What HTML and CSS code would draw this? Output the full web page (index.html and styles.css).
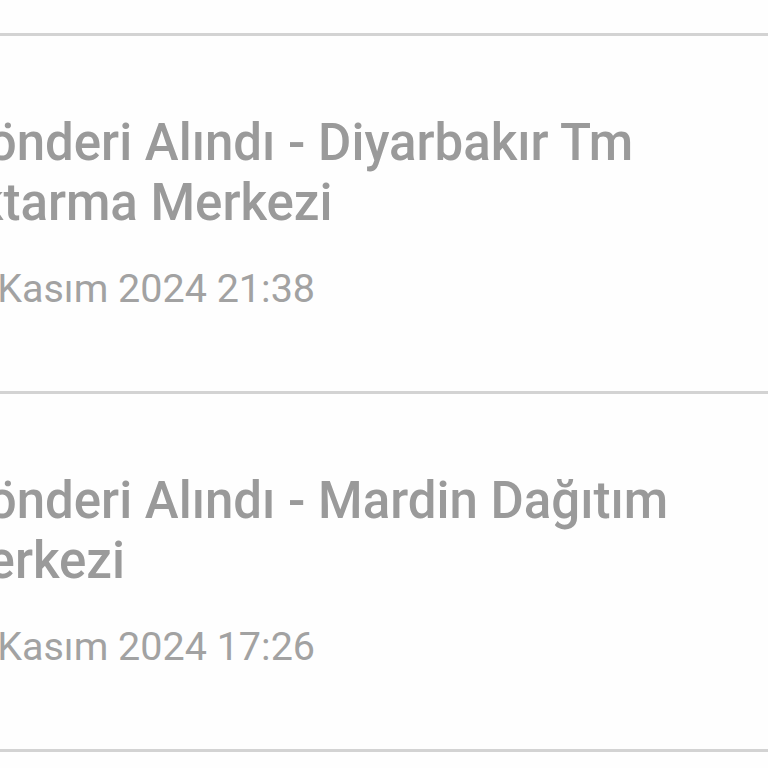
FILE: index.html
```html
<!DOCTYPE html>
<html lang="tr">
<head>
<meta charset="utf-8">
<title>Gönderi Hareketleri</title>
<link rel="stylesheet" href="styles.css">
</head>
<body>
<div class="list">
  <div class="item">
    <div class="title">Gönderi Alındı - Diyarbakır Tm Aktarma Merkezi</div>
    <div class="date">20 Kasım 2024 21:38</div>
  </div>
  <div class="item">
    <div class="title">Gönderi Alındı - Mardin Dağıtım Merkezi</div>
    <div class="date">20 Kasım 2024 17:26</div>
  </div>
  <div class="item">
    <div class="title">Gönderi Kabul Edildi</div>
    <div class="date">20 Kasım 2024 12:10</div>
  </div>
</div>
</body>
</html>
```
FILE: styles.css
```css
html, body {
  margin: 0;
  padding: 0;
  background: #fefefe;
  overflow: hidden;
}
.list {
  margin-top: 33px;
  margin-left: -57px;
  font-family: Roboto, "Noto Sans", sans-serif;
}
.item {
  border-top: 3px solid #d3d3d3;
  height: 355px;
}
.title {
  font-size: 51px;
  font-weight: 500;
  line-height: 60px;
  color: #9a9a9a;
  margin-top: 77px;
  text-indent: 10px;
}
.date {
  font-size: 39.5px;
  font-weight: 400;
  line-height: 44px;
  color: #a2a2a2;
  margin-top: 34px;
}
```
